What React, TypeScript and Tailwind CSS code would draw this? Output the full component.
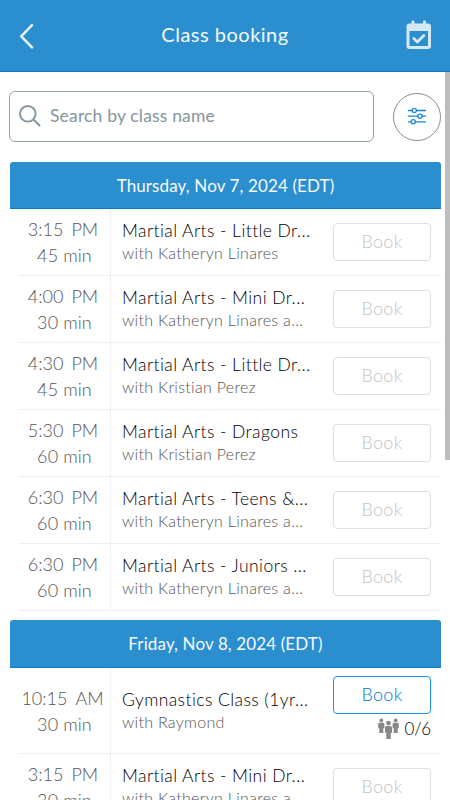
import clsx from 'clsx';

interface ClassItem {
  time: string;
  period: string;
  duration: string;
  name: string;
  instructor: string;
  spots?: string;
}

interface Day {
  label: string;
  classes: ClassItem[];
}

const DAYS: Day[] = [
  {
    label: 'Thursday, Nov 7, 2024 (EDT)',
    classes: [
      { time: '3:15', period: 'PM', duration: '45 min', name: 'Martial Arts - Little Dr...', instructor: 'with Katheryn Linares' },
      { time: '4:00', period: 'PM', duration: '30 min', name: 'Martial Arts - Mini Dr...', instructor: 'with Katheryn Linares a...' },
      { time: '4:30', period: 'PM', duration: '45 min', name: 'Martial Arts - Little Dr...', instructor: 'with Kristian Perez' },
      { time: '5:30', period: 'PM', duration: '60 min', name: 'Martial Arts - Dragons', instructor: 'with Kristian Perez' },
      { time: '6:30', period: 'PM', duration: '60 min', name: 'Martial Arts - Teens &...', instructor: 'with Katheryn Linares a...' },
      { time: '6:30', period: 'PM', duration: '60 min', name: 'Martial Arts - Juniors ...', instructor: 'with Katheryn Linares a...' },
    ],
  },
  {
    label: 'Friday, Nov 8, 2024 (EDT)',
    classes: [
      { time: '10:15', period: 'AM', duration: '30 min', name: 'Gymnastics Class (1yr...', instructor: 'with Raymond', spots: '0/6' },
      { time: '3:15', period: 'PM', duration: '30 min', name: 'Martial Arts - Mini Dr...', instructor: 'with Katheryn Linares a...' },
    ],
  },
];

function BackIcon() {
  return (
    <svg width="16" height="28" viewBox="0 0 16 28" fill="none" stroke="#e3f1fb" strokeWidth="2.6" strokeLinecap="round" strokeLinejoin="round">
      <path d="M14 3.2 3.2 14.3 14 25.4" />
    </svg>
  );
}

function CalendarIcon() {
  return (
    <svg width="26" height="30" viewBox="0 0 26 30">
      <path fill="#d5e8f6" fillRule="evenodd" d="M3.5 3.6h2V1.8a1.5 1.5 0 0 1 3 0v1.8h8.5V1.8a1.5 1.5 0 0 1 3 0v1.8h2a3 3 0 0 1 3 3V26a3 3 0 0 1-3 3H3.5a3 3 0 0 1-3-3V6.600a3 3 0 0 1 3-3Zm0 7.400v15H22V11Z" />
      <path fill="none" stroke="#d5e8f6" strokeWidth="2.800" strokeLinecap="round" strokeLinejoin="round" d="m7.800 18.500 3.500 3.600 6.500-6.500" />
    </svg>
  );
}

function SearchIcon() {
  return (
    <svg width="22" height="22" viewBox="0 0 22 22" fill="none" stroke="#84959e" strokeWidth="1.9" strokeLinecap="round">
      <circle cx="8.8" cy="8.8" r="7.8" />
      <path d="m14.5 14.5 6 6" />
    </svg>
  );
}

function FilterIcon() {
  return (
    <svg width="20" height="18" viewBox="0 0 20 18" stroke="#1b86cb" strokeWidth="1.3" fill="#fff">
      <path d="M1 2.5h18M1 8.2h18M1 13.800h18" />
      <circle cx="7.3" cy="2.5" r="2.1" />
      <circle cx="13" cy="8.2" r="2.1" />
      <circle cx="6.2" cy="13.8" r="2.1" />
    </svg>
  );
}

function PeopleIcon() {
  return (
    <svg width="21" height="22" viewBox="0 0 21 22" fill="#888">
      <circle cx="3.3" cy="2.4" r="1.9" />
      <path d="M1.4 4.7h3.8Q6.4 4.7 6.4 6v4.2H5.3V15h-4v-4.8H.2V6q0-1.3 1.2-1.3Z" />
      <circle cx="17.7" cy="2.4" r="1.9" />
      <path d="M15.8 4.7h3.8q1.2 0 1.2 1.3v4.2h-1.1V15h-4v-4.8h-1.1V6q0-1.3 1.2-1.3Z" />
      <circle cx="10.5" cy="5.1" r="2.4" />
      <path d="M8.6 8.1h3.8q1.6 0 1.6 1.5v5.2h-1.3V21H8.3v-6.2H7V9.6q0-1.5 1.6-1.5Z" />
    </svg>
  );
}

function ClassRow({ item }: { item: ClassItem }) {
  const available = Boolean(item.spots);

  return (
    <div className={clsx('flex pl-[9px] font-light', available ? 'h-[86px]' : 'h-[67px]')}>
      <div className="flex min-w-0 flex-1 border-b border-[#edf1f4]">
        <div className="flex w-[92px] shrink-0 flex-col justify-center border-r border-dotted border-[#e2e6e9] text-center text-[18px] leading-[26px] text-[#555]">
          <div className={clsx('-mx-2 flex justify-center', available ? 'gap-[8px] pr-[4px]' : 'gap-[8px] pr-[3px]')}>
            <span>{item.time}</span>
            <span>{item.period}</span>
          </div>
          <div className="tracking-[0.1px]">{item.duration}</div>
        </div>
        <div className={clsx('flex min-w-0 flex-1 flex-col justify-center whitespace-nowrap pl-[11px]', !available && 'pb-[2px]')}>
          <div className="text-[17.5px] leading-[24px] tracking-[0.43px] text-black">{item.name}</div>
          <div className="-mt-px text-[16px] leading-[22px] tracking-[0.3px] text-[#555]">{item.instructor}</div>
        </div>
        <div className={clsx('flex w-[108px] shrink-0 flex-col items-end pr-[10px]', available ? 'pt-2' : 'pt-[14px]')}>
          <button
            className={clsx(
              'flex h-[38px] w-[98px] items-center justify-center rounded-[4px] border pb-px text-[18px] tracking-[0.3px]',
              available ? 'border-[#1697e5] text-[#0079d8]' : 'border-[#dedede] text-[#c4c4c4]',
            )}
          >
            Book
          </button>
          {item.spots && (
            <div className="mt-[4px] flex items-center gap-[5px] text-[17px] leading-[22px] text-black">
              <PeopleIcon />
              <span className="-mt-px tracking-[-0.2px]">{item.spots}</span>
            </div>
          )}
        </div>
      </div>
    </div>
  );
}

export default function App() {
  return (
    <div className="flex h-[800px] w-[450px] flex-col overflow-hidden bg-white font-['Lato',sans-serif] [font-variant-ligatures:none]">
      <header className="flex h-[72px] shrink-0 items-center justify-between border-b border-[#0c7bc3] bg-[#2b8ecf] pl-[18px] pr-[18px]">
        <div className="w-[26px]">
          <BackIcon />
        </div>
        <h1 className="pb-[4px] text-[20px] leading-[28px] tracking-[0.5px] text-[#f5fafd]">Class booking</h1>
        <div className="pb-[2px]">
          <CalendarIcon />
        </div>
      </header>

      <div className="flex min-h-0 flex-1">
        <main className="w-[445px] shrink-0 overflow-hidden pl-[10px]">
          <div className="flex items-center justify-between pr-[4px] pt-[19px]">
            <div className="-ml-px flex h-[51px] w-[365px] items-center gap-[9px] rounded-[6px] border border-[#95a3ac] pb-px pl-[9px] text-[17.5px] tracking-[0.17px] text-[#84959e]">
              <SearchIcon />
              <span className="pt-px">Search by class name</span>
            </div>
            <button className="flex size-12 items-center justify-center rounded-full border border-[#84919a]">
              <FilterIcon />
            </button>
          </div>

          <div className="mt-[20px] flex w-[431px] flex-col gap-[9px]">
            {DAYS.map((day) => (
              <section key={day.label} className="group">
                <h2 className="flex h-[47px] items-center justify-center rounded-t-[3px] border-b border-[#0c7bc3] bg-[#2b8ecf] pt-px text-[17px] tracking-[0.12px] text-[#f5fafd] group-last:h-[48px]">
                  {day.label}
                </h2>
                {day.classes.map((item, index) => (
                  <ClassRow key={index} item={item} />
                ))}
              </section>
            ))}
          </div>
        </main>
        {/* Scroll thumb */}
        <div className="h-[388px] flex-1 bg-[#bdbdbd]" />
      </div>
    </div>
  );
}
